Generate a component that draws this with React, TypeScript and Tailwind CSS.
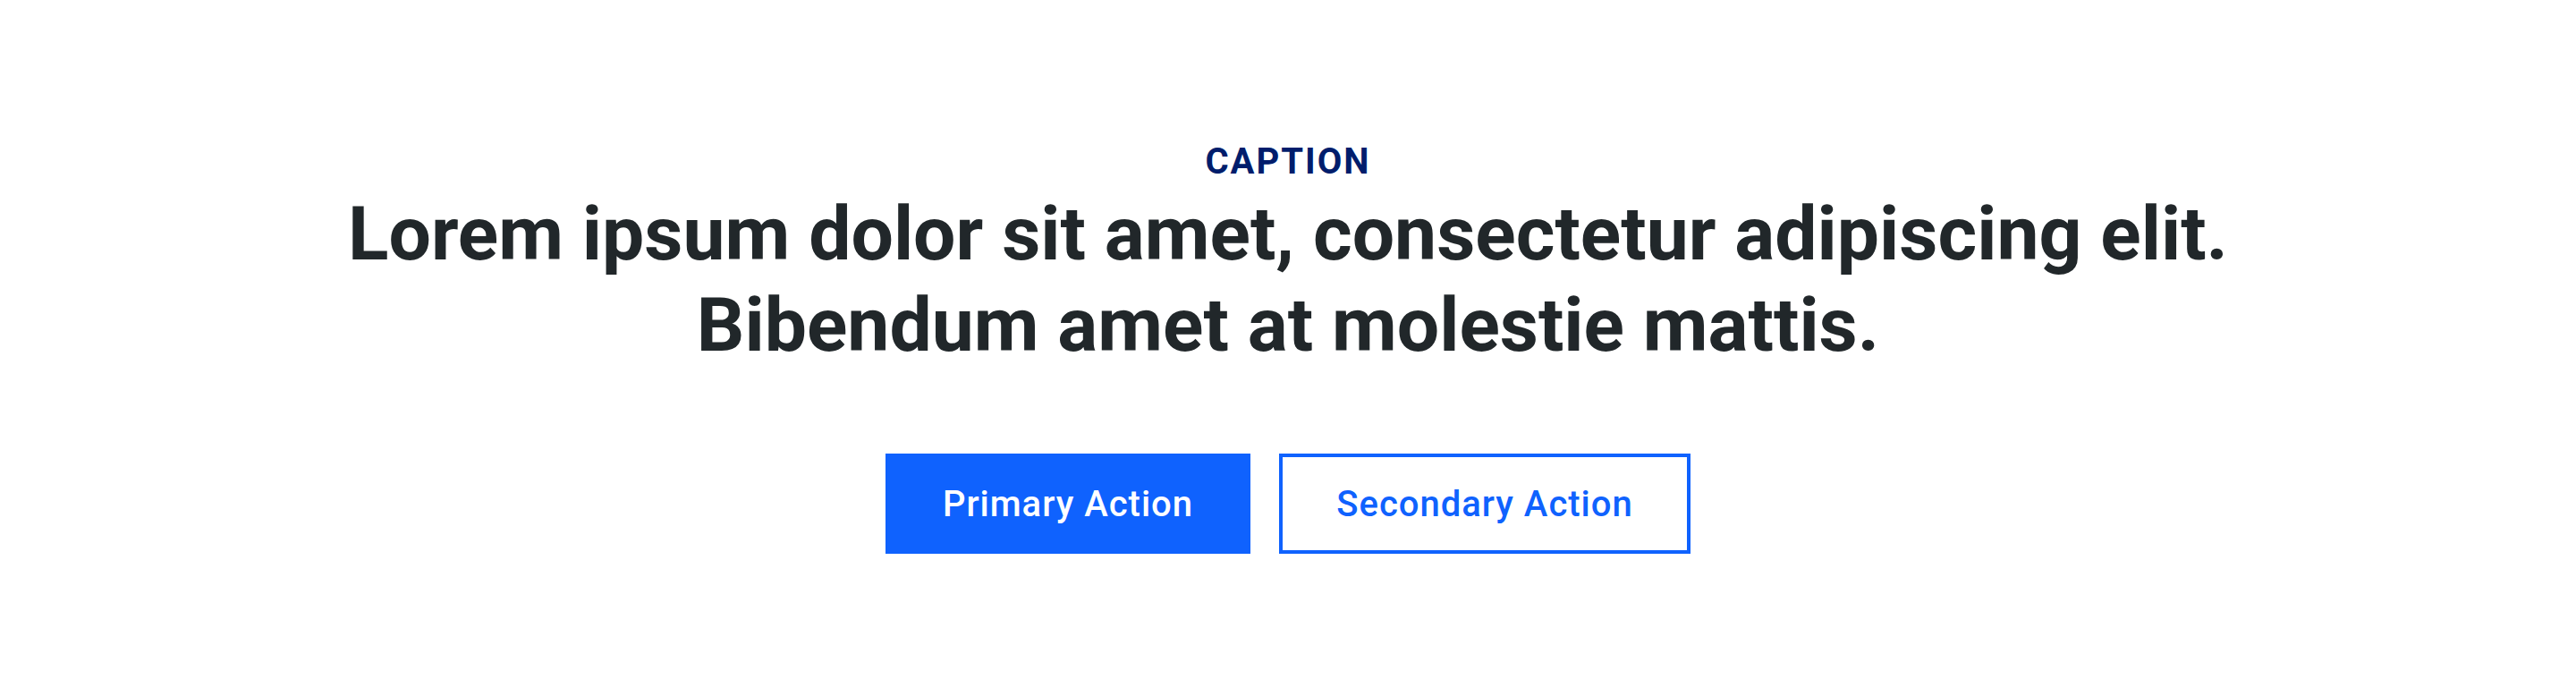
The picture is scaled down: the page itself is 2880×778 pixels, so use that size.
export default function App() {
  return (
    <div className="min-h-[778px] w-full bg-white font-['Roboto',sans-serif]">
      <section className="flex flex-col items-center pt-[156px] text-center">
        <p className="text-[40px] leading-[50px] font-bold tracking-[0.05em] text-[#001d6c]">
          CAPTION
        </p>
        <h1 className="mt-[5px] text-[84px] leading-[102px] font-bold text-[#21272a]">
          Lorem ipsum dolor sit amet, consectetur adipiscing elit.
          <br />
          Bibendum amet at molestie mattis.
        </h1>
        <div className="mt-[92px] flex gap-[32px]">
          <button className="flex h-[112px] w-[408px] items-center justify-center bg-[#0f62fe] pt-[2px] text-[40px] font-medium tracking-[0.025em] text-white">
            Primary Action
          </button>
          <button className="flex h-[112px] w-[460px] items-center justify-center border-4 border-[#0f62fe] bg-white pt-[2px] text-[40px] font-medium tracking-[0.025em] text-[#0f62fe]">
            Secondary Action
          </button>
        </div>
      </section>
    </div>
  );
}
